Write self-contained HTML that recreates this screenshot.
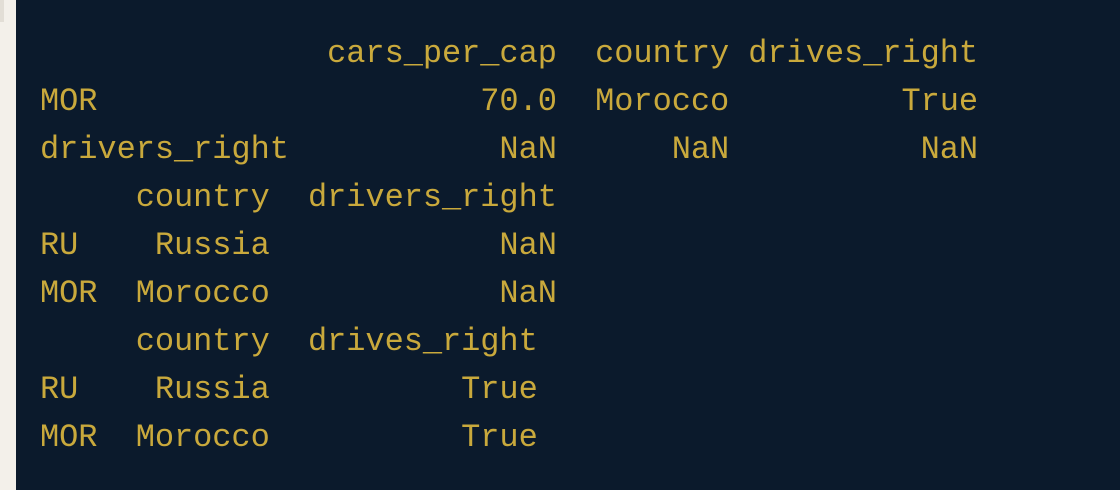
<!DOCTYPE html>
<html><head><meta charset="utf-8"><style>
html,body{margin:0;padding:0;width:1120px;height:490px;overflow:hidden;background:#f3f0ea;}
.term{position:absolute;left:16px;top:0;width:1104px;height:490px;background:#0b1a2c;}
.tl{position:absolute;left:0;top:0;width:4px;height:22px;background:#e2ded6;}
pre{position:absolute;left:40px;top:30px;margin:0;font-family:"Liberation Mono",monospace;font-size:32px;letter-spacing:-0.06px;line-height:48px;color:#c9a93c;white-space:pre;}
</style></head><body>
<div class="tl"></div>
<div class="term"></div>
<pre>               cars_per_cap  country drives_right
MOR                    70.0  Morocco         True
drivers_right           NaN      NaN          NaN
     country  drivers_right
RU    Russia            NaN
MOR  Morocco            NaN
     country  drives_right
RU    Russia          True
MOR  Morocco          True</pre>
</body></html>
